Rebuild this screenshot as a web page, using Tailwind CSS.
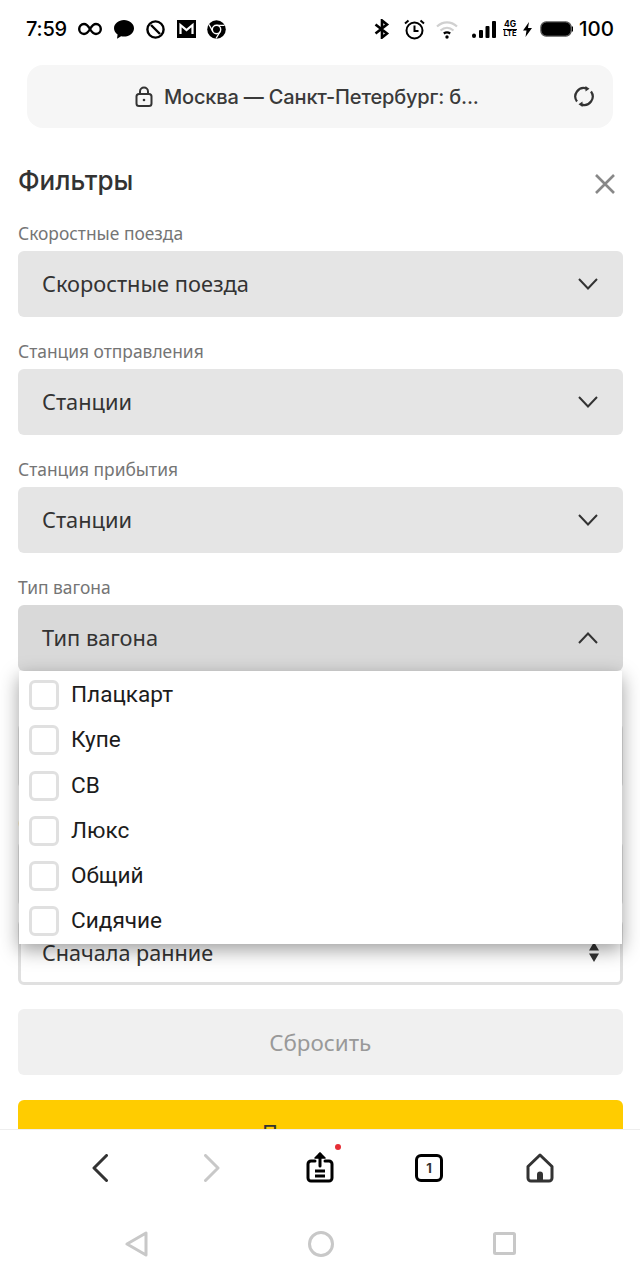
<!DOCTYPE html>
<html lang="ru">
<head>
<meta charset="utf-8">
<title>Фильтры</title>
<script src="https://cdn.jsdelivr.net/npm/@tailwindcss/browser@4"></script>
</head>
<body class="bg-white">
<div class="w-[640px] h-[1280px] flex flex-col overflow-hidden bg-white font-['Inter','Noto_Sans',sans-serif]">

  <!-- status bar -->
  <div class="h-[58px] shrink-0 flex items-center justify-between pl-[26px] pr-[26px] text-black">
    <div class="flex items-center">
      <span class="text-[20px] font-medium w-[52px] tracking-[-0.2px]">7:59</span>
      <svg class="w-[24px] h-[14px]" viewBox="0 0 24 14" fill="none" stroke="#000" stroke-width="2.4"><path d="M12 7C10 3.500 8.500 2 6 2 3.200 2 1.200 4.200 1.200 7S3.200 12 6 12c2.500 0 4-1.500 6-5s3.500-5 6-5c2.800 0 4.800 2.200 4.800 5s-2 5-4.800 5c-2.500 0-4-1.500-6-5z"/></svg>
      <svg class="w-[20px] h-[19px] ml-[12px]" viewBox="0 0 20 19" fill="#000"><path d="M10 0c5.500 0 10 3.700 10 8.300s-4.500 8.300-10 8.300c-1 0-2-.1-2.900-.4L3 18.800l.6-4.200C1.400 13.100 0 10.800 0 8.300 0 3.700 4.500 0 10 0z"/></svg>
      <svg class="w-[19px] h-[19px] ml-[12px]" viewBox="0 0 19 19" fill="none" stroke="#000" stroke-width="2.400"><circle cx="9.500" cy="9.500" r="8.100"/><path d="M5 5l9 9"/></svg>
      <svg class="w-[19px] h-[18px] ml-[12px]" viewBox="0 0 19 18"><rect width="19" height="18" fill="#000"/><path d="M3.500 14V5l6 5 6-5v9" fill="none" stroke="#fff" stroke-width="2.200"/></svg>
      <svg class="w-[19px] h-[19px] ml-[11px]" viewBox="0 0 19 19"><circle cx="9.500" cy="9.500" r="9.300" fill="#000"/><circle cx="9.500" cy="9.500" r="4.200" fill="#000" stroke="#fff" stroke-width="1.400"/><path d="M9.500 5.300h8M5.900 11.600L2 4.500M13.100 11.600L9 18.500" stroke="#fff" stroke-width="1.300" fill="none"/></svg>
    </div>
    <div class="flex items-center">
      <svg class="w-[16px] h-[20px]" viewBox="0 0 16 20" fill="none" stroke="#000" stroke-width="2.600"><path d="M1.500 5.500L13 14.500 8 18.500V1.500l5 4L1.500 14.500"/></svg>
      <svg class="w-[21px] h-[21px] ml-[14px]" viewBox="0 0 21 21" fill="none" stroke="#000" stroke-width="2"><circle cx="10.500" cy="11.500" r="8"/><path d="M10.500 6.500v5.500h4M1 4.500L4.500 1.500M20 4.500l-3.500-3" /></svg>
      <svg class="w-[22px] h-[19px] ml-[11px]" viewBox="0 0 22 19" fill="none" stroke-width="2.200"><path d="M1 6.500C7 1 15 1 21 6.500" stroke="#d0d0d0"/><path d="M4.500 10.500c4-3.500 9-3.500 13 0" stroke="#d0d0d0"/><path d="M7.800 13.500c2-1.500 4.400-1.500 6.400 0" stroke="#000"/><circle cx="11" cy="17" r="1.700" fill="#000" stroke="none"/></svg>
      <svg class="w-[24px] h-[17px] ml-[14px]" viewBox="0 0 24 17" fill="#000"><rect x="0" y="12.500" width="4" height="4.500" rx="2"/><rect x="7" y="9" width="4" height="8" rx="1"/><rect x="13.500" y="5" width="4" height="12" rx="1"/><rect x="20" y="0" width="4" height="17" rx="1"/></svg>
      <div class="ml-[7px] w-[14px] flex flex-col items-center text-[8.500px] leading-[9px] font-bold"><span>4G</span><span class="border-t border-black leading-[8px] text-[7.500px]">LTE</span></div>
      <svg class="w-[9px] h-[15px] ml-[6px]" viewBox="0 0 9 15" fill="#000"><path d="M6 0L0 8.500h3.500L2.500 15 9 6H5z"/></svg>
      <svg class="w-[33px] h-[16px] ml-[8px]" viewBox="0 0 33 16"><rect x="1" y="1" width="30" height="14" rx="5.500" fill="#000" stroke="#000" stroke-width="1.500"/><rect x="31.500" y="5.500" width="1.500" height="5" fill="#000"/><rect x="0.800" y="0.800" width="30.400" height="14.400" rx="6" fill="none" stroke="#fff" stroke-width="0.500"/></svg>
      <span class="text-[20.500px] font-medium ml-[6px] leading-none">100</span>
    </div>
  </div>

  <!-- address bar -->
  <div class="shrink-0 mx-[27px] mt-[7px] h-[63px] rounded-2xl bg-[#f6f6f6] flex items-center relative pl-[108px] pr-[18px]">
    <svg class="w-[18px] h-[21px] shrink-0" viewBox="0 0 18 21" fill="none" stroke="#333" stroke-width="2"><rect x="1.500" y="8" width="15" height="12" rx="2.500"/><path d="M5 8V5.500a4 4 0 018 0V8"/><circle cx="9" cy="14" r="1.300" fill="#333" stroke="none"/></svg>
    <span class="ml-[11px] text-[20px] font-medium text-[#3a3a3a] whitespace-nowrap tracking-[-0.17px]">Москва — Санкт-Петербург: б...</span>
    <svg class="w-[22px] h-[21px] ml-auto" viewBox="0 0 22 21" fill="none" stroke="#333" stroke-width="2.200"><path d="M4 15.500A8.500 8.500 0 0 1 13.500 2.400"/><path d="M18 5.500A8.500 8.500 0 0 1 8.500 18.600"/><path d="M12.500 0l4 2.800-4 2.700z" fill="#333" stroke="none"/><path d="M9.500 21l-4-2.800 4-2.700z" fill="#333" stroke="none"/></svg>
  </div>

  <!-- filters -->
  <div class="flex-1 min-h-0 overflow-hidden pl-[18px] pr-[17.500px] text-[#333] font-['Noto_Sans',sans-serif]">
    <div class="flex items-center justify-between h-[42px] mt-[32px] pr-[8px]">
      <h1 class="text-[26px] leading-none font-medium font-['Inter',sans-serif] text-[#333]">Фильтры</h1>
      <svg class="w-[20px] h-[20px] mt-[6px]" viewBox="0 0 20 20" fill="none" stroke="#888" stroke-width="2.600"><path d="M1 1l18 18M19 1L1 19"/></svg>
    </div>

    <div class="mt-[20px] h-[23px] text-[17.400px] leading-[23px] text-[#757575]">Скоростные поезда</div>
    <div class="mt-[6px] h-[66px] rounded-md bg-[#e5e5e5] flex items-center justify-between pl-[24px] pr-[25px] text-[21.800px]">
      <span>Скоростные поезда</span>
      <svg class="w-[20px] h-[12px]" viewBox="0 0 20 12" fill="none" stroke="#333" stroke-width="2"><path d="M1 1l9 9.500L19 1"/></svg>
    </div>

    <div class="mt-[23px] h-[23px] text-[17.400px] leading-[23px] text-[#757575]">Станция отправления</div>
    <div class="mt-[6px] h-[66px] rounded-md bg-[#e5e5e5] flex items-center justify-between pl-[24px] pr-[25px] text-[21.800px]">
      <span>Станции</span>
      <svg class="w-[20px] h-[12px]" viewBox="0 0 20 12" fill="none" stroke="#333" stroke-width="2"><path d="M1 1l9 9.500L19 1"/></svg>
    </div>

    <div class="mt-[23px] h-[23px] text-[17.400px] leading-[23px] text-[#757575]">Станция прибытия</div>
    <div class="mt-[6px] h-[66px] rounded-md bg-[#e5e5e5] flex items-center justify-between pl-[24px] pr-[25px] text-[21.800px]">
      <span>Станции</span>
      <svg class="w-[20px] h-[12px]" viewBox="0 0 20 12" fill="none" stroke="#333" stroke-width="2"><path d="M1 1l9 9.500L19 1"/></svg>
    </div>

    <div class="mt-[23px] h-[23px] text-[17.400px] leading-[23px] text-[#757575]">Тип вагона</div>
    <div class="relative z-10 mt-[6px] h-[66px] rounded-md bg-[#d9d9d9] flex items-center justify-between pl-[24px] pr-[25px] text-[21.800px]">
      <span>Тип вагона</span>
      <svg class="w-[20px] h-[12px]" viewBox="0 0 20 12" fill="none" stroke="#333" stroke-width="2"><path d="M1 11l9-9.500L19 11"/></svg>

      <!-- opened list -->
      <ul class="absolute left-px right-px top-full h-[273px] pt-[1.500px] bg-white shadow-[0_6px_18px_rgba(0,0,0,0.38)] font-['Roboto',sans-serif] text-[22.600px] text-[#1c1c1c] flex flex-col">
        <li class="h-[45.400px] flex items-center pl-[10px]"><span class="w-[30px] h-[30px] rounded-md border-[3px] border-[#e0e0e0]"></span><span class="ml-[12px]">Плацкарт</span></li>
        <li class="h-[45.400px] flex items-center pl-[10px]"><span class="w-[30px] h-[30px] rounded-md border-[3px] border-[#e0e0e0]"></span><span class="ml-[12px]">Купе</span></li>
        <li class="h-[45.400px] flex items-center pl-[10px]"><span class="w-[30px] h-[30px] rounded-md border-[3px] border-[#e0e0e0]"></span><span class="ml-[12px]">СВ</span></li>
        <li class="h-[45.400px] flex items-center pl-[10px]"><span class="w-[30px] h-[30px] rounded-md border-[3px] border-[#e0e0e0]"></span><span class="ml-[12px]">Люкс</span></li>
        <li class="h-[45.400px] flex items-center pl-[10px]"><span class="w-[30px] h-[30px] rounded-md border-[3px] border-[#e0e0e0]"></span><span class="ml-[12px]">Общий</span></li>
        <li class="h-[45.400px] flex items-center pl-[10px]"><span class="w-[30px] h-[30px] rounded-md border-[3px] border-[#e0e0e0]"></span><span class="ml-[12px]">Сидячие</span></li>
      </ul>
    </div>

    <div class="mt-[52px] h-[66px] rounded-md bg-[#e5e5e5]"></div>
    <div class="mt-[23px] h-[23px] text-[17.400px] leading-[23px] text-[#757575]">Станции</div>
    <div class="mt-[6px] h-[66px] rounded-md bg-[#e5e5e5]"></div>

    <div class="mt-[12px] h-[66px] rounded-md border-[3px] border-[#e0e0e0] bg-white flex items-center justify-between pl-[21px] pr-[21px] pt-[2px] text-[21.600px]">
      <span>Сначала ранние</span>
      <svg class="w-[10px] h-[20px] mt-[-2px]" viewBox="0 0 10 20" fill="#333"><path d="M5 0l5 8.500H0zM5 20L0 11.500h10z"/></svg>
    </div>

    <div class="mt-[24px] h-[66px] rounded-md bg-[#f0f0f0] flex items-center justify-center pt-[2px] text-[22.400px] text-[#999]">Сбросить</div>
    <div class="mt-[25px] h-[66px] rounded-md bg-[#ffcc00] flex items-center justify-center pr-[20px] text-[21.800px] text-[#333]">Показать</div>
  </div>

  <!-- browser toolbar -->
  <div class="shrink-0 h-[77px] bg-white border-t border-[#eeeeee] relative flex items-center pl-[92px]">
    <svg class="w-[16px] h-[28px] mt-[-1px]" viewBox="0 0 16 28" fill="none" stroke="#333" stroke-width="3" stroke-linecap="round" stroke-linejoin="round"><path d="M14.500 1.500L2 14l12.500 12.500"/></svg>
    <svg class="w-[16px] h-[28px] mt-[-1px] ml-[96px]" viewBox="0 0 16 28" fill="none" stroke="#c8c8c8" stroke-width="3" stroke-linecap="round" stroke-linejoin="round"><path d="M1.500 1.500L14 14 1.500 26.500"/></svg>
    <span class="relative block w-[28px] h-[32px] ml-[86px] mt-[-2px]">
      <svg class="w-[28px] h-[32px]" viewBox="0 0 28 32" fill="none" stroke="#000" stroke-width="3" stroke-linecap="round" stroke-linejoin="round"><path d="M9 10H5a3 3 0 00-3 3v14a3 3 0 003 3h18a3 3 0 003-3V13a3 3 0 00-3-3h-4"/><path d="M14 15V3"/><path d="M9 7l5-5 5 5z" fill="#000" stroke-width="1.500"/><path d="M9 20h10M9 25h10" stroke-linecap="butt"/></svg>
      <span class="absolute right-[-7px] top-[-7px] w-[6px] h-[6px] rounded-full bg-[#e62e36]"></span>
    </span>
    <span class="w-[28px] h-[28px] ml-[81px] rounded-md border-[3px] border-black flex items-center justify-center text-[13px] font-bold text-[#333] leading-none">1</span>
    <svg class="w-[28px] h-[30px] ml-[83px]" viewBox="0 0 28 30" fill="none" stroke="#333" stroke-width="3" stroke-linejoin="round"><path d="M14 2L2 13.500V25a3 3 0 003 3h18a3 3 0 003-3V13.500z"/><path d="M11 28v-6.500a3 3 0 016 0V28z" fill="#333" stroke="none"/></svg>
  </div>

  <!-- android navigation -->
  <div class="shrink-0 h-[74px] bg-white relative flex items-start justify-between pl-[125px] pr-[124px] pt-[25px]">
    <svg class="w-[23px] h-[26px]" viewBox="0 0 23 26" fill="none" stroke="#c8c8c8" stroke-width="3" stroke-linejoin="round"><path d="M21 2v22L2 13z"/></svg>
    <svg class="w-[26px] h-[26px]" viewBox="0 0 26 26" fill="none" stroke="#c8c8c8" stroke-width="3"><circle cx="13" cy="13" r="11.500"/></svg>
    <svg class="w-[23px] h-[23px] mt-[1px]" viewBox="0 0 23 23" fill="none" stroke="#c8c8c8" stroke-width="3" stroke-linejoin="round"><rect x="1.500" y="1.500" width="20" height="20" rx="1"/></svg>
  </div>
</div>
</body>
</html>
